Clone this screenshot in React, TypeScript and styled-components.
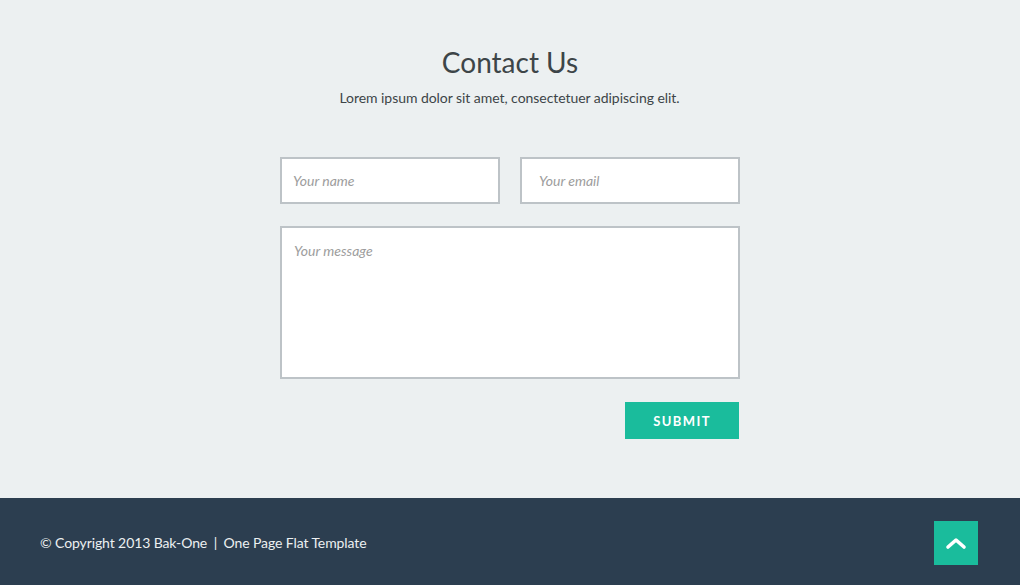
import React from "react";
import styled, { createGlobalStyle } from "styled-components";

const Global = createGlobalStyle`
  html, body { margin: 0; padding: 0; background: #ecf0f1; }
  body { font-family: Lato, "Open Sans", sans-serif; }
  * { box-sizing: border-box; }
`;

const Page = styled.div`
  display: flex;
  flex-direction: column;
  min-height: 585px;
`;

const Section = styled.section`
  background: #ecf0f1;
  padding: 45px 0 59px;
  display: flex;
  flex-direction: column;
  align-items: center;
`;

const Title = styled.h2`
  margin: 0;
  font-family: Lato, sans-serif;
  font-weight: 400;
  font-size: 28px;
  line-height: 34px;
  color: #3d4548;
`;

const Subtitle = styled.p`
  margin: 10px 0 0 -1px;
  font-size: 14px;
  line-height: 17px;
  letter-spacing: -0.05px;
  color: #3d4548;
`;

const Form = styled.form`
  width: 460px;
  margin-top: 51px;
  display: flex;
  flex-direction: column;
`;

const Row = styled.div`
  display: grid;
  grid-template-columns: 1fr 1fr;
  gap: 20px;
`;

const fieldStyles = `
  width: 100%;
  background: #fff;
  border: 2px solid #bdc3c7;
  border-radius: 0;
  font-family: Lato, sans-serif;
  font-size: 14px;
  color: #555;
  outline: none;
  &::placeholder { color: #9d9d9d; font-style: italic; }
`;

const Input = styled.input<{ $indent: number }>`
  ${fieldStyles}
  height: 47px;
  padding: 0 11px 0 ${(p) => p.$indent}px;
`;

const TextArea = styled.textarea`
  ${fieldStyles}
  margin-top: 22px;
  height: 153px;
  padding: 14px 12px;
  resize: none;
  display: block;
`;

const Actions = styled.div`
  display: flex;
  justify-content: flex-end;
  margin-top: 23px;
  padding-right: 1px;
`;

const Submit = styled.button`
  width: 114px;
  height: 37px;
  border: 0;
  background: #1abc9c;
  color: #fff;
  font-family: Lato, sans-serif;
  font-weight: 700;
  font-size: 13px;
  letter-spacing: 1.4px;
  text-transform: uppercase;
  cursor: pointer;
`;

const Footer = styled.footer`
  background: #2c3e50;
  height: 87px;
  padding: 0 42px 0 40px;
  display: flex;
  align-items: center;
  justify-content: space-between;
`;

const Copy = styled.p`
  margin: 2px 0 0;
  font-size: 14px;
  letter-spacing: -0.1px;
  color: #ecf0f1;
`;

const Sep = styled.span`
  margin: 0 3px;
`;

const TopButton = styled.a`
  width: 44px;
  height: 44px;
  margin-top: 3px;
  background: #1abc9c;
  display: flex;
  align-items: center;
  justify-content: center;
`;

export default function App() {
  return (
    <Page>
      <Global />
      <Section>
        <Title>Contact Us</Title>
        <Subtitle>Lorem ipsum dolor sit amet, consectetuer adipiscing elit.</Subtitle>
        <Form onSubmit={(e) => e.preventDefault()}>
          <Row>
            <Input $indent={11} type="text" placeholder="Your name" />
            <Input $indent={17} type="email" placeholder="Your email" />
          </Row>
          <TextArea placeholder="Your message" />
          <Actions>
            <Submit type="submit">Submit</Submit>
          </Actions>
        </Form>
      </Section>
      <Footer>
        <Copy>
          © Copyright 2013 Bak-One <Sep>|</Sep> One Page Flat Template
        </Copy>
        <TopButton href="#">
          <svg width="22" height="14" viewBox="0 0 22 14">
            <polyline
              points="3,11 11,4 19,11"
              fill="none"
              stroke="#fff"
              strokeWidth="3.6"
              strokeLinecap="round"
              strokeLinejoin="round"
            />
          </svg>
        </TopButton>
      </Footer>
    </Page>
  );
}
